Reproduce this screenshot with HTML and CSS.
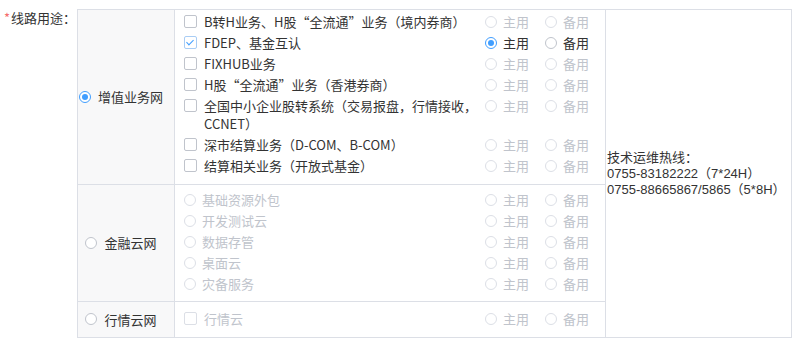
FILE: index.html
```html
<!DOCTYPE html>
<html lang="zh-CN">
<head>
    <meta charset="UTF-8">
    <meta name="viewport" content="width=device-width, initial-scale=1.0">
    <title>线路用途</title>
    <link rel="stylesheet" href="styles.css">
</head>
<body>
    <div class="form-item">
        <div class="form-label"><span class="required">*</span>线路用途：</div>
        <table class="line-table">
            <colgroup>
                <col class="col-cat">
                <col class="col-items">
                <col class="col-hotline">
            </colgroup>
            <tr>
                <td class="cat">
                    <label class="radio is-checked"><span class="dot"></span>增值业务网</label>
                </td>
                <td class="items items-first">
                    <div class="item">
                        <label class="check"><span class="box"></span><span class="text">B转H业务、H股“全流通”业务（境内券商）</span></label>
                        <div class="usage">
                            <label class="radio is-disabled"><span class="dot"></span>主用</label>
                            <label class="radio is-disabled"><span class="dot"></span>备用</label>
                        </div>
                    </div>
                    <div class="item">
                        <label class="check is-checked"><span class="box"></span><span class="text">FDEP、基金互认</span></label>
                        <div class="usage">
                            <label class="radio is-checked"><span class="dot"></span>主用</label>
                            <label class="radio"><span class="dot"></span>备用</label>
                        </div>
                    </div>
                    <div class="item">
                        <label class="check"><span class="box"></span><span class="text">FIXHUB业务</span></label>
                        <div class="usage">
                            <label class="radio is-disabled"><span class="dot"></span>主用</label>
                            <label class="radio is-disabled"><span class="dot"></span>备用</label>
                        </div>
                    </div>
                    <div class="item">
                        <label class="check"><span class="box"></span><span class="text">H股“全流通”业务（香港券商）</span></label>
                        <div class="usage">
                            <label class="radio is-disabled"><span class="dot"></span>主用</label>
                            <label class="radio is-disabled"><span class="dot"></span>备用</label>
                        </div>
                    </div>
                    <div class="item">
                        <label class="check"><span class="box"></span><span class="text">全国中小企业股转系统（交易报盘，行情接收，CCNET）</span></label>
                        <div class="usage">
                            <label class="radio is-disabled"><span class="dot"></span>主用</label>
                            <label class="radio is-disabled"><span class="dot"></span>备用</label>
                        </div>
                    </div>
                    <div class="item">
                        <label class="check"><span class="box"></span><span class="text">深市结算业务（D-COM、B-COM）</span></label>
                        <div class="usage">
                            <label class="radio is-disabled"><span class="dot"></span>主用</label>
                            <label class="radio is-disabled"><span class="dot"></span>备用</label>
                        </div>
                    </div>
                    <div class="item">
                        <label class="check"><span class="box"></span><span class="text">结算相关业务（开放式基金）</span></label>
                        <div class="usage">
                            <label class="radio is-disabled"><span class="dot"></span>主用</label>
                            <label class="radio is-disabled"><span class="dot"></span>备用</label>
                        </div>
                    </div>
                </td>
                <td class="hotline" rowspan="3">
                    技术运维热线：<br>
                    0755-83182222（7*24H）<br>
                    0755-88665867/5865（5*8H）
                </td>
            </tr>
            <tr>
                <td class="cat">
                    <label class="radio"><span class="dot"></span>金融云网</label>
                </td>
                <td class="items items-cloud">
                    <div class="item">
                        <label class="radio is-disabled"><span class="dot"></span><span class="text">基础资源外包</span></label>
                        <div class="usage">
                            <label class="radio is-disabled"><span class="dot"></span>主用</label>
                            <label class="radio is-disabled"><span class="dot"></span>备用</label>
                        </div>
                    </div>
                    <div class="item">
                        <label class="radio is-disabled"><span class="dot"></span><span class="text">开发测试云</span></label>
                        <div class="usage">
                            <label class="radio is-disabled"><span class="dot"></span>主用</label>
                            <label class="radio is-disabled"><span class="dot"></span>备用</label>
                        </div>
                    </div>
                    <div class="item">
                        <label class="radio is-disabled"><span class="dot"></span><span class="text">数据存管</span></label>
                        <div class="usage">
                            <label class="radio is-disabled"><span class="dot"></span>主用</label>
                            <label class="radio is-disabled"><span class="dot"></span>备用</label>
                        </div>
                    </div>
                    <div class="item">
                        <label class="radio is-disabled"><span class="dot"></span><span class="text">桌面云</span></label>
                        <div class="usage">
                            <label class="radio is-disabled"><span class="dot"></span>主用</label>
                            <label class="radio is-disabled"><span class="dot"></span>备用</label>
                        </div>
                    </div>
                    <div class="item">
                        <label class="radio is-disabled"><span class="dot"></span><span class="text">灾备服务</span></label>
                        <div class="usage">
                            <label class="radio is-disabled"><span class="dot"></span>主用</label>
                            <label class="radio is-disabled"><span class="dot"></span>备用</label>
                        </div>
                    </div>
                </td>
            </tr>
            <tr>
                <td class="cat">
                    <label class="radio"><span class="dot"></span>行情云网</label>
                </td>
                <td class="items items-quote">
                    <div class="item">
                        <label class="check is-disabled"><span class="box"></span><span class="text">行情云</span></label>
                        <div class="usage">
                            <label class="radio is-disabled"><span class="dot"></span>主用</label>
                            <label class="radio is-disabled"><span class="dot"></span>备用</label>
                        </div>
                    </div>
                </td>
            </tr>
        </table>
    </div>
</body>
</html>
```

FILE: styles.css
```css
body {
    margin: 0;
    padding: 0;
    background-color: #fff;
    color: #333;
    font-family: "Noto Sans CJK SC", "Noto Sans", sans-serif;
    font-size: 13px;
}

.form-item {
    display: flex;
    align-items: flex-start;
    padding-top: 9px;
}

.form-label {
    width: 73px;
    padding-left: 4px;
    line-height: 18px;
    white-space: nowrap;
}

.required {
    color: #f56c6c;
    margin-right: 1px;
}

.line-table {
    border-collapse: collapse;
    table-layout: fixed;
    width: 714px;
}

.col-cat {
    width: 97px;
}

.col-items {
    width: 431px;
}

.col-hotline {
    width: 186px;
}

.line-table td {
    border: 1px solid #dcdfe6;
    padding: 0;
}

.cat {
    background-color: #f8f8f9;
    text-align: center;
    vertical-align: middle;
    padding-right: 10px !important;
}

.items {
    vertical-align: top;
    padding-left: 9px !important;
    padding-right: 16px !important;
}

.items-first {
    padding-top: 1px !important;
    padding-bottom: 8px !important;
}

.items-cloud {
    padding-top: 4px !important;
    padding-bottom: 7px !important;
}

.items-quote {
    padding-top: 6px !important;
    padding-bottom: 8px !important;
}

.item {
    display: flex;
    align-items: flex-start;
    padding: 2px 0 1px;
    line-height: 18px;
}

.item > .check,
.item > .radio {
    flex: 1;
    display: flex;
    align-items: flex-start;
}

.item .text {
    width: 280px;
}

.usage {
    display: flex;
    width: 104px;
    gap: 16px;
}

.hotline {
    vertical-align: middle;
    padding-left: 1px !important;
    font-family: "Liberation Sans", "Noto Sans CJK SC", sans-serif;
    line-height: 16px;
    white-space: nowrap;
}

/* radio */
.radio {
    display: inline-flex;
    align-items: center;
    gap: 6px;
    white-space: nowrap;
}

.cat .radio {
    gap: 7px;
}

.radio .dot {
    position: relative;
    flex: none;
    width: 12px;
    height: 12px;
    box-sizing: border-box;
    border: 1px solid #c0c4cc;
    border-radius: 50%;
    background-color: #fff;
}

.item > .radio .dot {
    margin-top: 3px;
}

.radio.is-checked .dot {
    border-color: #409eff;
}

.radio.is-checked .dot::after {
    content: "";
    position: absolute;
    left: 2px;
    top: 2px;
    width: 6px;
    height: 6px;
    border-radius: 50%;
    background-color: #409eff;
}

.radio.is-disabled {
    color: #c0c4cc;
}

.radio.is-disabled .dot {
    border-color: #dcdfe6;
}

/* checkbox */
.check {
    gap: 7px;
}

.check .box {
    position: relative;
    flex: none;
    width: 13px;
    height: 13px;
    margin-top: 2px;
    box-sizing: border-box;
    border: 1px solid #c0c4cc;
    border-radius: 2px;
    background-color: #fff;
}

.check.is-checked .box {
    border-color: #a9cdf5;
}

.check.is-checked .box::after {
    content: "";
    position: absolute;
    left: 3px;
    top: 1px;
    width: 3px;
    height: 6px;
    border: solid #409eff;
    border-width: 0 1.5px 1.5px 0;
    transform: rotate(45deg);
}

.check.is-disabled {
    color: #c0c4cc;
}

.check.is-disabled .box {
    border-color: #dcdfe6;
}
```
